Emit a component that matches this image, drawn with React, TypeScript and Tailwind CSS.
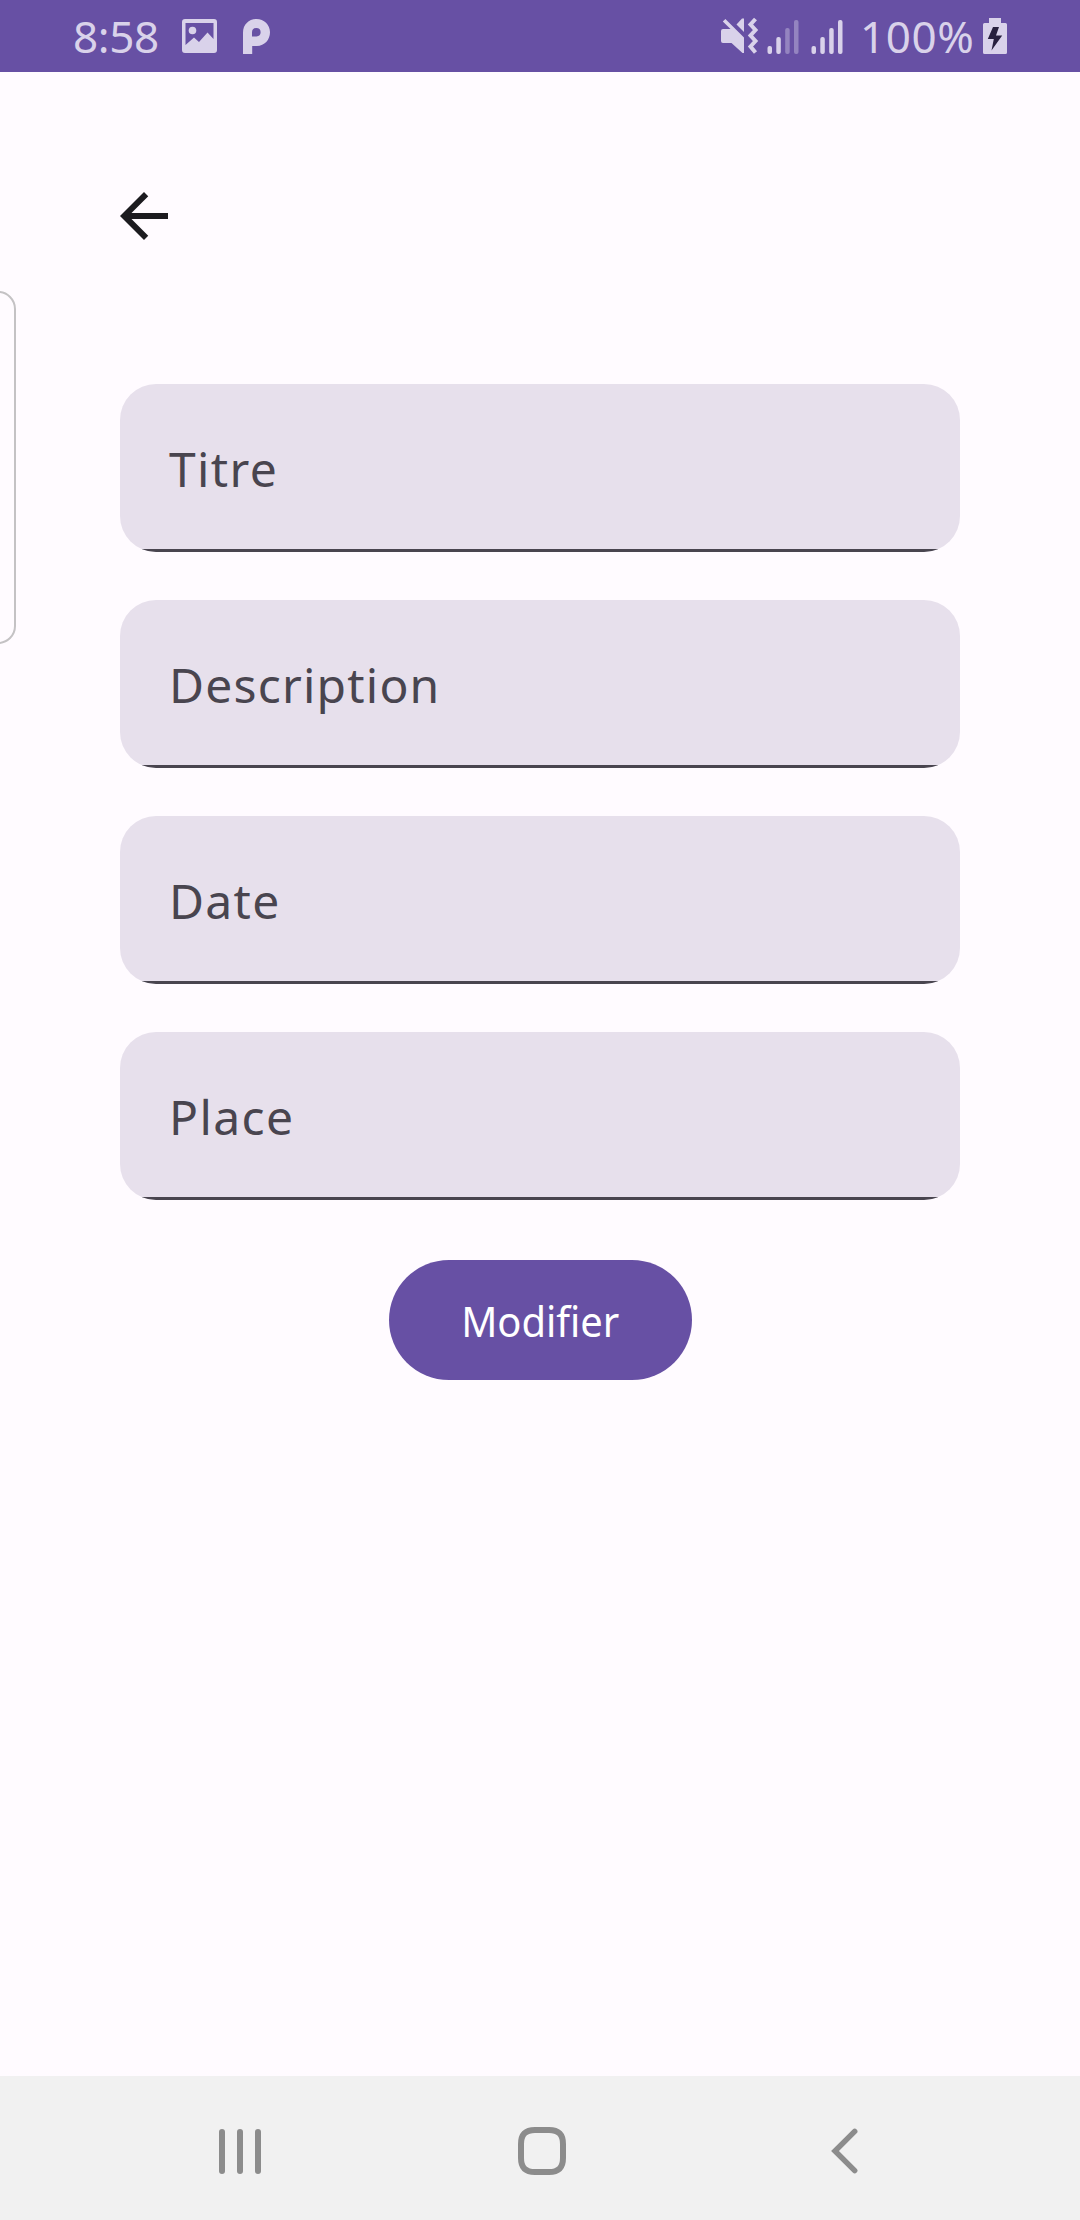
const FIELDS = [
  { label: "Titre", tracking: "tracking-[1.4px]", inset: "pl-[49px]" },
  { label: "Description", tracking: "tracking-[1.2px]", inset: "pl-[49px]" },
  { label: "Date", tracking: "tracking-[1.3px]", inset: "pl-[49px]" },
  { label: "Place", tracking: "tracking-[1.4px]", inset: "pl-[49px]" },
];

function StatusBar() {
  return (
    <header className="flex h-[72px] shrink-0 items-center bg-[#6750a4] pl-[73px] pr-[72px] text-[44px] leading-[72px] text-[#d9d2ea]">
      <span className="w-[87px] tracking-[-0.4px]">8:58</span>
      <svg className="ml-[22px] h-[72px] w-[35px]" viewBox="182 0 35 72" fill="currentColor">
        <path
          fillRule="evenodd"
          d="M185 19h29a3 3 0 0 1 3 3v28a3 3 0 0 1-3 3h-29a3 3 0 0 1-3-3V22a3 3 0 0 1 3-3zM185.500 23v22l8.500-7.500 5 4.500 8.500-9.500 6 6.500V23z"
        />
        <circle cx="192.500" cy="30.500" r="3.800" />
      </svg>
      <svg className="ml-[26px] h-[72px] w-[27px]" viewBox="243 0 27 72" fill="currentColor">
        <path
          fillRule="evenodd"
          d="M243 54V32.500C243 24.500 249 19 256.500 19S270 24.800 270 32.300 264.500 46 257 46h-4.800v8zM252 36.500h4.500a4.300 4.300 0 1 0-4.500-4.300z"
        />
      </svg>
      <div className="grow" />
      <svg className="h-[72px] w-[124px]" viewBox="720 0 124 72" fill="currentColor">
        <path d="M723 29h7.500l-7.700-7.500 2.600-2.600L744 37.500V53h-1.500L731.500 43H723q-2 0-2-2V31q0-2 2-2z" />
        <path d="M736.500 24.500L742 18.500h2v13.500z" />
        <path
          d="M755.500 19l-5 5.500 5 5.500-5 5.500 5 5.500-5 5.500 5 6"
          fill="none"
          stroke="currentColor"
          strokeWidth="4"
        />
        <rect x="767.500" y="46" width="4.500" height="8" rx="2" />
        <rect x="776.300" y="37" width="4.500" height="17" rx="2" />
        <rect x="785.200" y="28" width="4.500" height="26" rx="2" opacity=".4" />
        <rect x="794" y="20" width="4.500" height="34" rx="2" opacity=".4" />
        <rect x="811.500" y="46" width="4.500" height="8" rx="2" />
        <rect x="820.300" y="37" width="4.500" height="17" rx="2" />
        <rect x="829.200" y="28" width="4.500" height="26" rx="2" />
        <rect x="838" y="20" width="4.500" height="34" rx="2" />
      </svg>
      <span className="ml-4 w-[123px] tracking-[0.6px]">100%</span>
      <svg className="h-[72px] w-[25px]" viewBox="983 0 25 72" fill="currentColor">
        <path d="M989 18h12v5h4.500a1.500 1.500 0 0 1 1.500 1.500v28a1.500 1.500 0 0 1-1.500 1.500h-21a1.500 1.500 0 0 1-1.500-1.500v-28a1.500 1.500 0 0 1 1.500-1.500h4.500z" />
        <path d="M993 27h6l-3 8.500h6.200L991.500 50.500l2.300-11.500h-6z" fill="#28203f" />
      </svg>
    </header>
  );
}

function NavigationBar() {
  return (
    <nav className="flex h-36 shrink-0 items-center bg-[#f1f1f1] pl-[219px] text-[#8c8c8c]">
      <div className="flex gap-3 pt-1.5">
        <span className="h-[45px] w-1.5 rounded-full bg-current" />
        <span className="h-[45px] w-1.5 rounded-full bg-current" />
        <span className="h-[45px] w-1.5 rounded-full bg-current" />
      </div>
      <svg className="ml-[257px] mt-1.5 size-12" viewBox="0 0 48 48" fill="none">
        <path
          d="M17 3h14c9.500 0 14 4.500 14 14v14c0 9.500-4.500 14-14 14H17C7.500 45 3 40.500 3 31V17C3 7.500 7.500 3 17 3z"
          stroke="currentColor"
          strokeWidth="6"
        />
      </svg>
      <svg className="ml-[264px] mt-1.5 h-12 w-7" viewBox="0 0 28 48" fill="none">
        <path d="M24.700 4.400L5 24l19.700 19.600" stroke="currentColor" strokeWidth="5.500" strokeLinecap="round" />
      </svg>
    </nav>
  );
}

export default function App() {
  return (
    <div className="relative flex h-[2220px] w-[1080px] flex-col overflow-hidden bg-[#fffbff] font-['Noto_Sans',sans-serif]">
      <StatusBar />
      <main className="flex grow flex-col px-[120px] pt-[108px]">
        <button className="-ml-3 size-[72px]" aria-label="Retour">
          <svg className="size-[72px]" viewBox="0 0 24 24" fill="#1c1b1f">
            <path d="M20 11H7.830l5.590-5.590L12 4l-8 8 8 8 1.410-1.410L7.830 13H20z" />
          </svg>
        </button>
        <div className="mt-[132px] flex flex-col gap-12">
          {FIELDS.map((field) => (
            <div key={field.label} className="h-[168px] overflow-hidden rounded-[36px] bg-[#e7e0ec]">
              <div
                className={`h-[168px] border-b-3 border-[#49454f] text-5xl leading-[170px] text-[#49454f] ${field.inset} ${field.tracking}`}
              >
                {field.label}
              </div>
            </div>
          ))}
        </div>
        <button className="ml-[269px] mt-[60px] h-[120px] w-[303px] rounded-full bg-[#6750a4] text-center text-[42px] leading-[120px] text-white">
          <span className="inline-block scale-x-95 pt-px">Modifier</span>
        </button>
      </main>
      <NavigationBar />
      <div className="absolute -left-8 top-[291px] h-[353px] w-12 rounded-[18px] border-2 border-[#c4c2c4]" />
    </div>
  );
}
